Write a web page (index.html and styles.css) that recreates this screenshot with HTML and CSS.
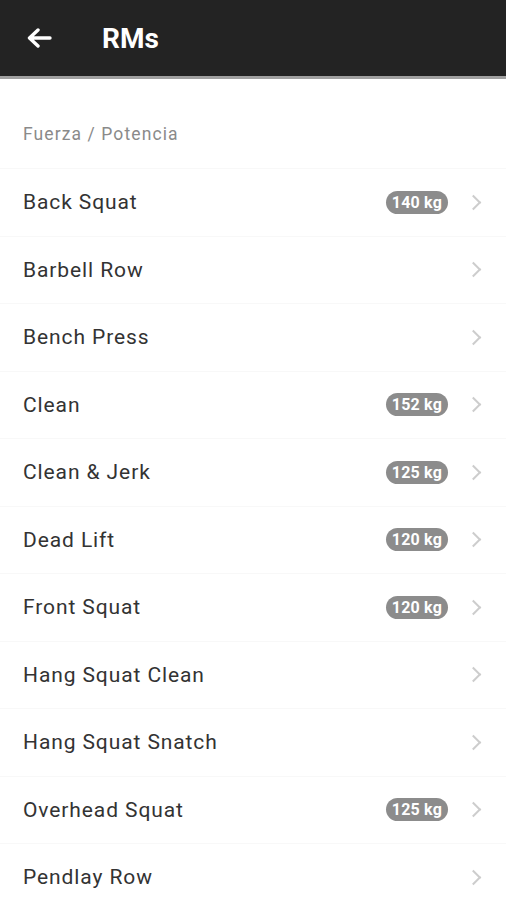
FILE: index.html
```html
<!DOCTYPE html>
<html>
<head>
	<title>RMs</title>
	<meta charset="utf-8">
	<!-- External css file -->
	<link rel="stylesheet" href="styles.css">
</head>
<body>

	<div class="toolbar">
		<span class="back">
			<svg width="26" height="20" viewBox="0 0 26 20">
				<path d="M24 10H4M12 2L3.5 10L12 18" fill="none" stroke="#fff" stroke-width="3.4" stroke-linecap="round" stroke-linejoin="round"/>
			</svg>
		</span>
		<h1 class="title">RMs</h1>
	</div>

	<div class="section">Fuerza / Potencia</div>

	<ul class="list">
		<li class="item"><span class="name">Back Squat</span><span class="badge">140 kg</span><span class="chev"></span></li>
		<li class="item"><span class="name">Barbell Row</span><span class="chev"></span></li>
		<li class="item"><span class="name">Bench Press</span><span class="chev"></span></li>
		<li class="item"><span class="name">Clean</span><span class="badge">152 kg</span><span class="chev"></span></li>
		<li class="item"><span class="name">Clean &amp; Jerk</span><span class="badge">125 kg</span><span class="chev"></span></li>
		<li class="item"><span class="name">Dead Lift</span><span class="badge">120 kg</span><span class="chev"></span></li>
		<li class="item"><span class="name">Front Squat</span><span class="badge">120 kg</span><span class="chev"></span></li>
		<li class="item"><span class="name">Hang Squat Clean</span><span class="chev"></span></li>
		<li class="item"><span class="name">Hang Squat Snatch</span><span class="chev"></span></li>
		<li class="item"><span class="name">Overhead Squat</span><span class="badge">125 kg</span><span class="chev"></span></li>
		<li class="item"><span class="name">Pendlay Row</span><span class="chev"></span></li>
	</ul>

</body>
</html>
```

FILE: styles.css
```css
body {
	margin: 0;
	background-color: #fff;
	font-family: Roboto, "Liberation Sans", sans-serif;
	overflow: hidden;
}
.toolbar {
	height: 76px;
	background-color: #232323;
	border-bottom: 3px solid #a0a0a0;
	display: flex;
	align-items: center;
}
.back {
	width: 26px;
	height: 20px;
	margin-left: 26px;
	display: flex;
}
.title {
	margin: 0 0 0 50px;
	color: #fff;
	font-size: 28px;
	font-weight: bold;
}
.section {
	height: 90px;
	box-sizing: border-box;
	padding: 20px 23px 0;
	display: flex;
	align-items: center;
	color: #8a8a8a;
	font-size: 17.5px;
	letter-spacing: 1.1px;
	border-bottom: 1px solid #f8f8f8;
}
.list {
	list-style: none;
	margin: 0;
	padding: 0;
}
.item {
	height: 67.5px;
	box-sizing: border-box;
	display: flex;
	align-items: center;
	padding: 0 22px 0 23px;
	border-bottom: 1px solid #f8f8f8;
}
.name {
	flex: 1;
	color: #333;
	font-size: 21px;
	letter-spacing: 0.9px;
}
.badge {
	background-color: #8c8c8c;
	color: #fff;
	font-size: 16px;
	font-weight: bold;
	letter-spacing: 0.2px;
	height: 23px;
	line-height: 23px;
	padding: 0 6px;
	border-radius: 12px;
}
/* chevron drawn with two borders */
.chev {
	width: 9px;
	height: 9px;
	margin: 0 5px 0 20px;
	border-top: 2px solid #cdcdcd;
	border-right: 2px solid #cdcdcd;
	transform: rotate(45deg);
}
```
